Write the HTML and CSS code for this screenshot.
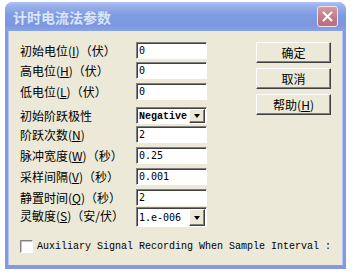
FILE: index.html
```html
<!DOCTYPE html>
<html lang="zh-CN">
<head>
  <meta charset="UTF-8" />
  <title>计时电流法参数</title>
  <link rel="stylesheet" href="styles.css">
</head>
<body>
  <div class="window">
    <div class="titlebar">
      <span class="title">计时电流法参数</span>
      <span class="close-btn">
        <svg width="11" height="11" viewBox="0 0 11 11">
          <path d="M1 1 L10 10 M10 1 L1 10" stroke="#fff" stroke-width="2" fill="none" />
        </svg>
      </span>
    </div>

    <div class="client">
      <div class="main">
        <div class="form">
          <label>初始电位(<u>I</u>)（伏）</label>
          <input class="field" type="text" value="0" />

          <label>高电位(<u>H</u>)（伏）</label>
          <input class="field" type="text" value="0" />

          <label>低电位(<u>L</u>)（伏）</label>
          <input class="field" type="text" value="0" />

          <label>初始阶跃极性</label>
          <div class="combo">
            <span class="combo-text serif">Negative</span>
            <span class="combo-arrow"></span>
          </div>

          <label>阶跃次数(<u>N</u>)</label>
          <input class="field" type="text" value="2" />

          <label>脉冲宽度(<u>W</u>)（秒）</label>
          <input class="field" type="text" value="0.25" />

          <label>采样间隔(<u>V</u>)（秒）</label>
          <input class="field" type="text" value="0.001" />

          <label>静置时间(<u>Q</u>)（秒）</label>
          <input class="field" type="text" value="2" />

          <label>灵敏度(<u>S</u>)（安/伏）</label>
          <div class="combo tall">
            <span class="combo-text">1.e-006</span>
            <span class="combo-arrow"></span>
          </div>
        </div>

        <div class="buttons">
          <button>确定</button>
          <button>取消</button>
          <button>帮助(<u>H</u>)</button>
        </div>
      </div>

      <div class="check-row">
        <span class="checkbox"></span>
        <span class="check-label">Auxiliary Signal Recording When Sample Interval :</span>
      </div>
    </div>
  </div>
</body>
</html>
```

FILE: styles.css
```css
body {
  margin: 0;
  background: #fff;
  font-family: "Noto Sans CJK SC", "DejaVu Sans", sans-serif;
  font-size: 12px;
  color: #000;
}
.window {
  width: 341px;
  margin: 2px 0 0 5px;
  background: #8399e2;
  border-radius: 8px 8px 0 0;
  padding-bottom: 4px;
}
.titlebar {
  height: 29px;
  display: flex;
  align-items: center;
  padding: 0 8px 0 8px;
  border-radius: 8px 8px 0 0;
  background: linear-gradient(to bottom, #b3c4f2 0%, #9bb1ec 12%, #7f9be2 45%, #7b97e0 80%, #8aa3e5 100%);
}
.title {
  font-weight: bold;
  font-size: 14px;
  color: #dbe5f9;
  letter-spacing: 0;
}
.close-btn {
  margin-left: auto;
  width: 19px;
  height: 19px;
  border: 1px solid #f2e4ea;
  border-radius: 3px;
  background: linear-gradient(to bottom, #d29aa4, #c27884 60%, #b8707c);
  display: flex;
  align-items: center;
  justify-content: center;
  margin-top: -1px;
}
.client {
  margin: 0 3px;
  height: 234px;
  background: #ece9d8;
  box-shadow: inset 1px 0 #b9c6ef, inset -1px 0 #b9c6ef;
  padding: 11px 12px 0 12px;
  box-sizing: border-box;
}
.main {
  display: flex;
}
.form {
  display: grid;
  grid-template-columns: 116px 71px;
  grid-template-rows: 20px 21px 24px 19px 21px 21px 21px 18px 22px;
  align-items: start;
}
.form label {
  white-space: nowrap;
  line-height: 17px;
  font-size: 12px;
}
.field {
  width: 71px;
  height: 17px;
  box-sizing: border-box;
  margin: 0;
  padding: 0 2px;
  border: 1px solid;
  border-color: #808080 #fff #fff #808080;
  box-shadow: inset 1px 1px #404040;
  background: #fff;
  font-family: "DejaVu Sans Mono", monospace;
  font-size: 10px;
  outline: none;
}
.combo {
  width: 71px;
  height: 17px;
  box-sizing: border-box;
  border: 1px solid;
  border-color: #808080 #fff #fff #808080;
  box-shadow: inset 1px 1px #404040;
  background: #fff;
  display: flex;
  align-items: center;
  padding: 1px 1px 0 2px;
}
.combo.tall {
  height: 20px;
}
.combo-text {
  flex: 1;
  font-family: "DejaVu Sans Mono", monospace;
  font-size: 10px;
  overflow: hidden;
  white-space: nowrap;
}
.combo-text.serif {
  font-family: "Liberation Mono", monospace;
  font-weight: bold;
}
.combo-arrow {
  width: 16px;
  align-self: stretch;
  box-sizing: border-box;
  background: #ece9d8;
  border: 1px solid;
  border-color: #fff #404040 #404040 #fff;
  box-shadow: inset -1px -1px #808080;
  position: relative;
}
.combo-arrow::after {
  content: "";
  position: absolute;
  left: 4px;
  top: 50%;
  margin-top: -2px;
  border-left: 3.5px solid transparent;
  border-right: 3.5px solid transparent;
  border-top: 4px solid #000;
}
.buttons {
  margin-left: auto;
  display: flex;
  flex-direction: column;
  gap: 5px;
}
.buttons button {
  width: 75px;
  height: 21px;
  margin: 0;
  padding: 0;
  background: #ece9d8;
  border: 1px solid;
  border-color: #fff #404040 #404040 #fff;
  box-shadow: inset -1px -1px #808080;
  font-family: "Noto Sans CJK SC", sans-serif;
  font-size: 12px;
  color: #000;
}
.check-row {
  display: flex;
  align-items: center;
  margin-top: 11px;
}
.checkbox {
  width: 13px;
  height: 13px;
  box-sizing: border-box;
  background: #fff;
  border: 1px solid;
  border-color: #808080 #fff #fff #808080;
  box-shadow: inset 1px 1px #c8c5b8;
}
.check-label {
  margin-left: 4px;
  font-family: "Liberation Mono", monospace;
  font-size: 10px;
  white-space: nowrap;
}
```
